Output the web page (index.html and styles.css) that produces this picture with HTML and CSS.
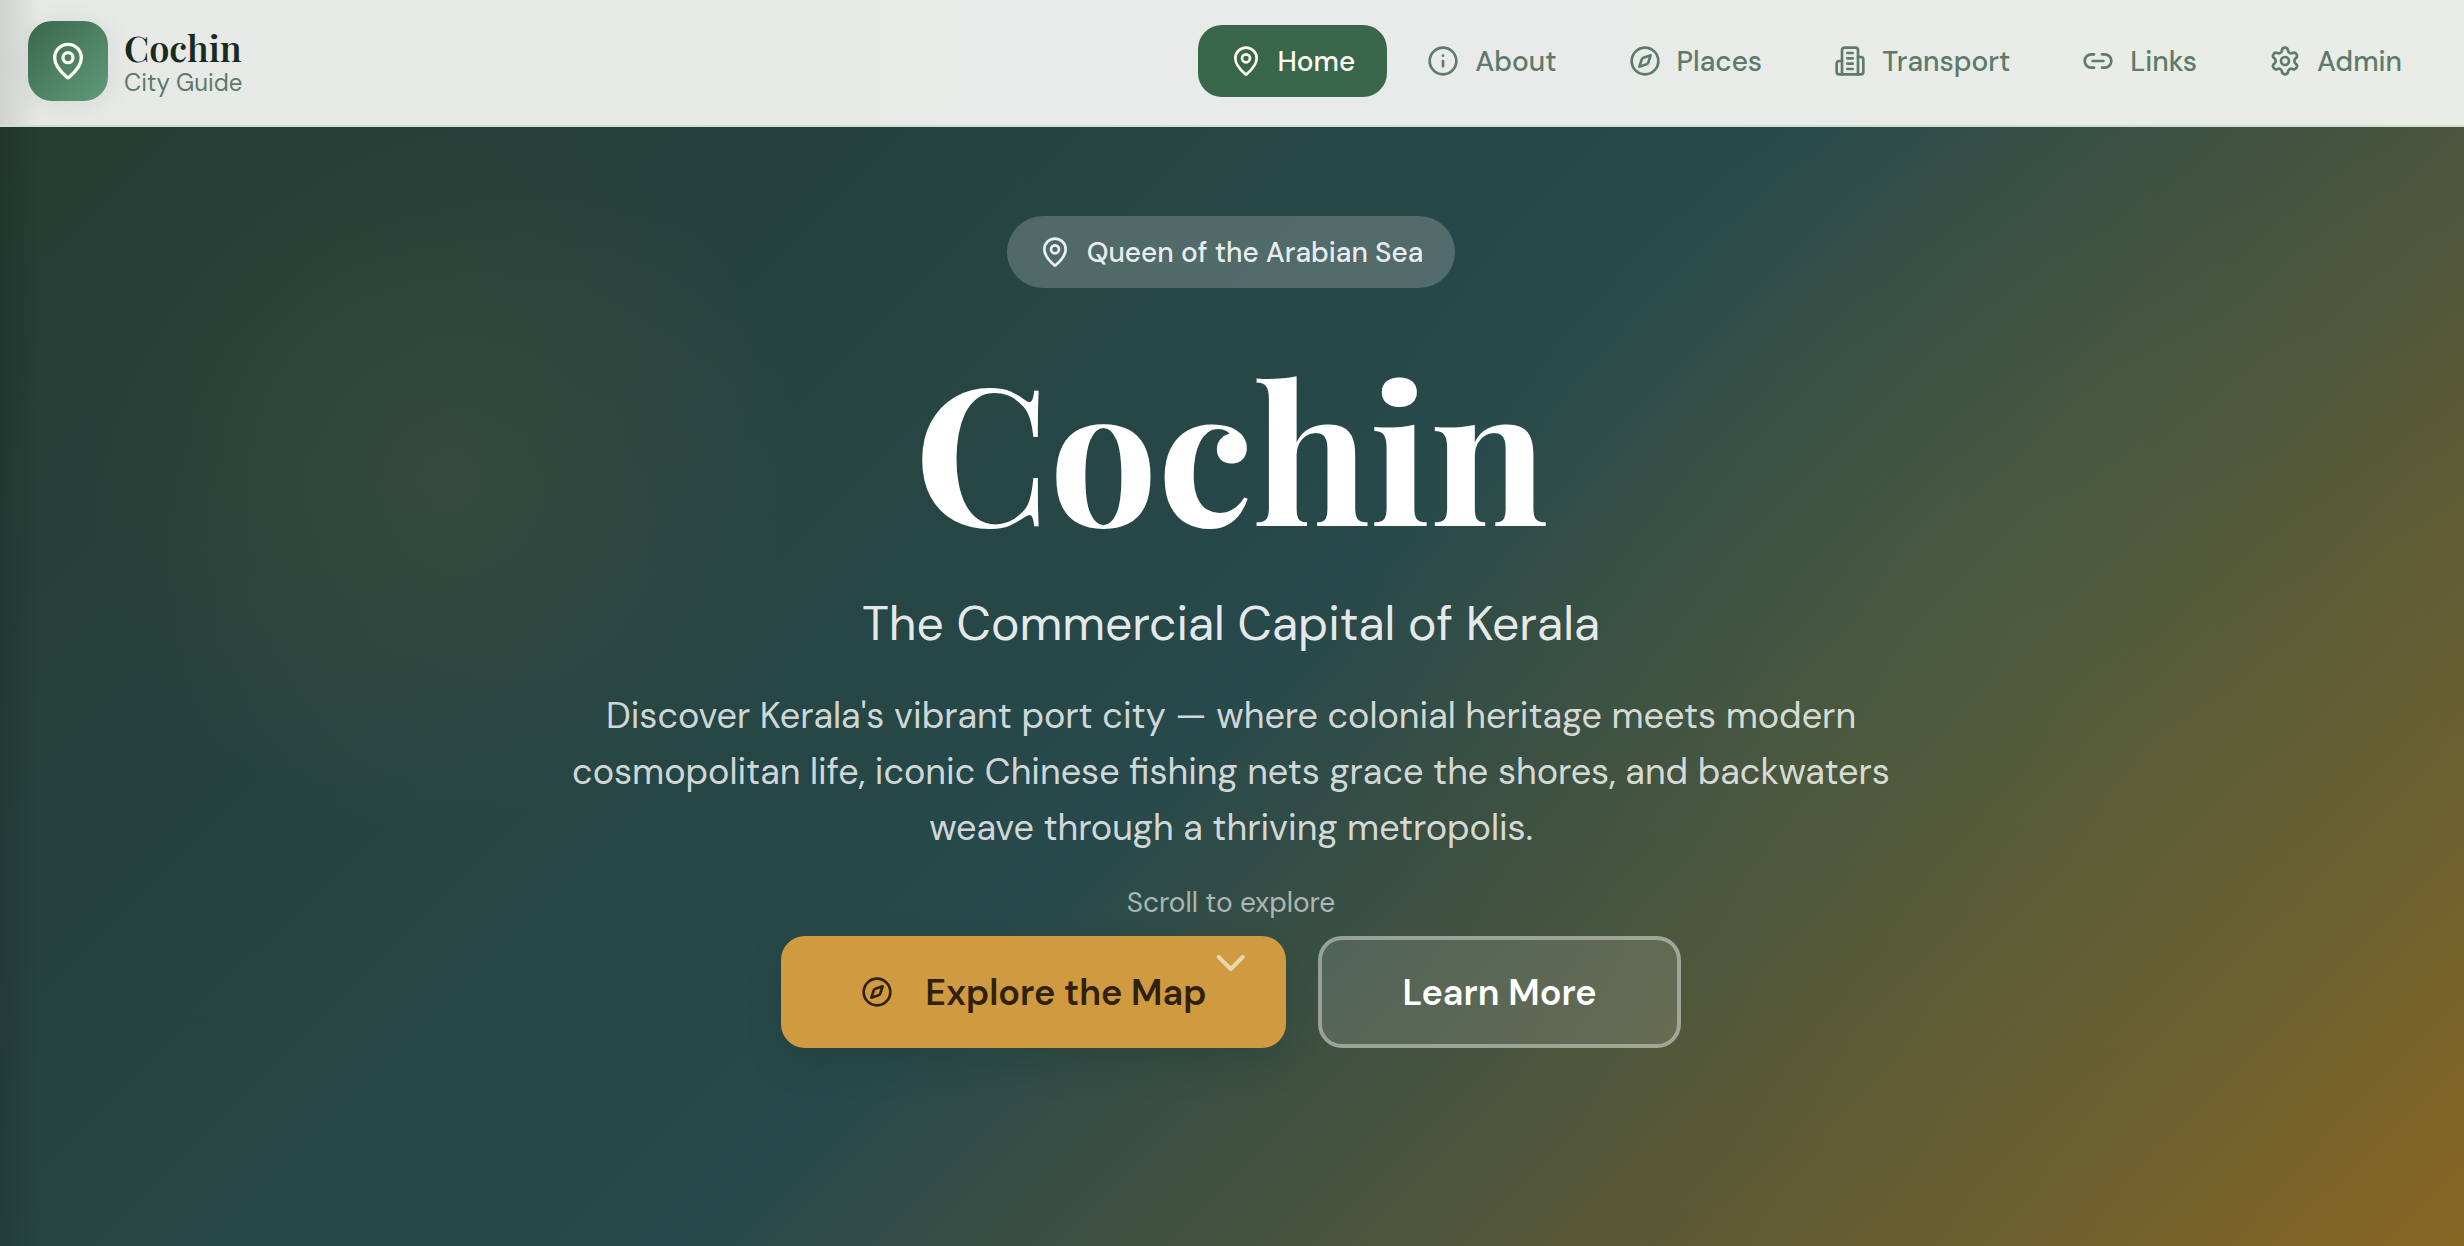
FILE: index.html
```html
<!DOCTYPE html>
<html lang="en">
<head>
  <meta charset="UTF-8" />
  <meta name="viewport" content="width=device-width, initial-scale=1.0"/>
  <title>Cochin City Guide</title>
  <link rel="stylesheet" href="styles.css">
</head>
<body>

  <!-- Shared icons -->
  <svg class="icon-defs" aria-hidden="true">
    <symbol id="pin" viewBox="0 0 24 24">
      <path d="M20 10c0 4.993-5.539 10.193-7.399 11.799a1 1 0 0 1-1.202 0C9.539 20.193 4 14.993 4 10a8 8 0 0 1 16 0"/>
      <circle cx="12" cy="10" r="3"/>
    </symbol>
    <symbol id="compass" viewBox="0 0 24 24">
      <path d="m16.24 7.76-1.804 5.411a2 2 0 0 1-1.265 1.265L7.76 16.24l1.804-5.411a2 2 0 0 1 1.265-1.265z"/>
      <circle cx="12" cy="12" r="10"/>
    </symbol>
  </svg>

  <header class="navbar">
    <a class="brand" href="#">
      <span class="brand-logo"><svg class="icon-lg"><use href="#pin"/></svg></span>
      <span class="brand-text">
        <span class="brand-name">Cochin</span>
        <span class="brand-sub">City Guide</span>
      </span>
    </a>
    <nav class="nav-links">
      <a class="active" href="#"><svg class="icon"><use href="#pin"/></svg>Home</a>
      <a href="#about"><svg class="icon" viewBox="0 0 24 24"><circle cx="12" cy="12" r="10"/><path d="M12 16v-4M12 8h.01"/></svg>About</a>
      <a href="#places"><svg class="icon"><use href="#compass"/></svg>Places</a>
      <a href="#transport"><svg class="icon" viewBox="0 0 24 24"><path d="M6 22V4a2 2 0 0 1 2-2h8a2 2 0 0 1 2 2v18Z"/><path d="M6 12H4a2 2 0 0 0-2 2v6a2 2 0 0 0 2 2h2"/><path d="M18 9h2a2 2 0 0 1 2 2v9a2 2 0 0 1-2 2h-2"/><path d="M10 6h4M10 10h4M10 14h4M10 18h4"/></svg>Transport</a>
      <a href="#links"><svg class="icon" viewBox="0 0 24 24"><path d="M9 17H7A5 5 0 0 1 7 7h2"/><path d="M15 7h2a5 5 0 1 1 0 10h-2"/><path d="M8 12h8"/></svg>Links</a>
      <a href="#admin"><svg class="icon" viewBox="0 0 24 24"><path d="M9.671 4.136a2.34 2.34 0 0 1 4.659 0 2.34 2.34 0 0 0 3.319 1.915 2.34 2.34 0 0 1 2.33 4.033 2.34 2.34 0 0 0 0 3.831 2.34 2.34 0 0 1-2.33 4.033 2.34 2.34 0 0 0-3.319 1.915 2.34 2.34 0 0 1-4.659 0 2.34 2.34 0 0 0-3.32-1.915 2.34 2.34 0 0 1-2.33-4.033 2.34 2.34 0 0 0 0-3.831A2.34 2.34 0 0 1 6.35 6.051a2.34 2.34 0 0 0 3.319-1.915"/><circle cx="12" cy="12" r="3"/></svg>Admin</a>
    </nav>
  </header>

  <main class="hero">
    <div class="badge"><svg class="icon"><use href="#pin"/></svg>Queen of the Arabian Sea</div>
    <h1>Cochin</h1>
    <p class="tagline">The Commercial Capital of Kerala</p>
    <p class="intro">Discover Kerala's vibrant port city — where colonial heritage meets modern cosmopolitan life, iconic Chinese fishing nets grace the shores, and backwaters weave through a thriving metropolis.</p>
    <div class="actions">
      <a class="btn btn-gold" href="#places"><svg class="icon"><use href="#compass"/></svg>Explore the Map</a>
      <a class="btn btn-outline" href="#about">Learn More</a>
      <div class="scroll-hint">
        <span>Scroll to explore</span>
        <svg viewBox="0 0 24 24"><path d="m6 9 6 6 6-6"/></svg>
      </div>
    </div>
  </main>

</body>
</html>
```

FILE: styles.css
```css
* {
  box-sizing: border-box;
}

body {
  margin: 0;
  min-height: 100vh;
  display: flex;
  flex-direction: column;
  font-family: "DM Sans", "Open Sans", "Noto Sans", sans-serif;
  font-size: 28px;
  color: white;
}

a {
  text-decoration: none;
}

svg {
  fill: none;
  stroke: currentColor;
  stroke-width: 2;
  stroke-linecap: round;
  stroke-linejoin: round;
  flex-shrink: 0;
}

.icon-defs {
  display: none;
}

.icon {
  width: 32px;
  height: 32px;
}

.icon-lg {
  width: 40px;
  height: 40px;
}

/* Navbar */
.navbar {
  display: flex;
  justify-content: space-between;
  align-items: center;
  padding: 21px 30px 24px 28px;
  background:
    linear-gradient(90deg, rgba(0, 0, 0, 0.1), transparent 40px),
    linear-gradient(90deg, #e7e9e6, #e8ebe9 60%, #eaece6);
  border-bottom: 2px solid #d0dfd6;
}

.brand {
  display: flex;
  align-items: center;
  gap: 16px;
}

.brand-logo {
  width: 80px;
  height: 80px;
  border-radius: 24px;
  display: flex;
  align-items: center;
  justify-content: center;
  color: #fffdf5;
  background: linear-gradient(135deg, #3a674b, #5f9b79);
  box-shadow: 0 4px 24px rgba(58, 120, 90, 0.12);
}

.brand-text {
  display: flex;
  flex-direction: column;
  padding-top: 4px;
}

.brand-name {
  font-family: "Playfair Display", "Liberation Serif", serif;
  font-size: 36px;
  line-height: 40px;
  font-weight: 600;
  color: #182b20;
}

.brand-sub {
  font-size: 24px;
  line-height: 32px;
  color: #5d7a6b;
}

.nav-links {
  display: flex;
  gap: 8px;
}

.nav-links a {
  display: flex;
  align-items: center;
  gap: 16px;
  height: 72px;
  padding: 0 32px;
  border-radius: 24px;
  font-weight: 500;
  color: #5d7a6b;
}

.nav-links .active {
  color: #fffdf5;
  background: #3a674b;
}

/* Hero */
.hero {
  flex: 1;
  display: flex;
  flex-direction: column;
  align-items: center;
  padding: 89px 34px 32px 32px;
  text-align: center;
  background:
    linear-gradient(90deg, rgba(0, 0, 0, 0.12), transparent 40px),
    radial-gradient(circle at 18% 31%, rgba(207, 154, 64, 0.09), transparent 360px),
    radial-gradient(circle at 82% 45%, rgba(80, 120, 75, 0.16), transparent 680px),
    linear-gradient(135deg, #243d32 0%, #27494b 50%, #876724 100%);
}

.badge {
  display: flex;
  align-items: center;
  gap: 16px;
  height: 72px;
  padding: 0 32px;
  border-radius: 36px;
  font-weight: 500;
  color: rgba(255, 255, 255, 0.9);
  background: rgba(255, 255, 255, 0.2);
}

h1 {
  margin: 62px 0 50px;
  font-family: "Playfair Display", "Liberation Serif", serif;
  font-size: 192px;
  line-height: 192px;
}

.tagline {
  margin: 0 0 32px;
  font-size: 48px;
  line-height: 64px;
  color: rgba(255, 255, 255, 0.9);
}

.intro {
  max-width: 1344px;
  margin: 0 0 80px;
  font-size: 36px;
  line-height: 56px;
  color: rgba(255, 255, 255, 0.8);
}

.actions {
  position: relative;
  display: flex;
  gap: 32px;
}

.btn {
  display: flex;
  align-items: center;
  gap: 32px;
  height: 112px;
  padding: 0 80px;
  border-radius: 24px;
  font-size: 36px;
  font-weight: 600;
}

.btn-gold {
  color: #2f210c;
  background: #cf9a40;
  box-shadow: 0 16px 32px rgba(20, 50, 40, 0.25);
}

.btn-outline {
  color: white;
  border: 4px solid rgba(255, 255, 255, 0.4);
  background: rgba(255, 255, 255, 0.12);
}

/* Sits over the buttons */
.scroll-hint {
  position: absolute;
  bottom: 61px;
  left: 50%;
  transform: translateX(-50%);
  display: flex;
  flex-direction: column;
  align-items: center;
  gap: 16px;
  line-height: 40px;
  white-space: nowrap;
  color: rgba(255, 255, 255, 0.6);
}

.scroll-hint svg {
  width: 48px;
  height: 48px;
}
```
